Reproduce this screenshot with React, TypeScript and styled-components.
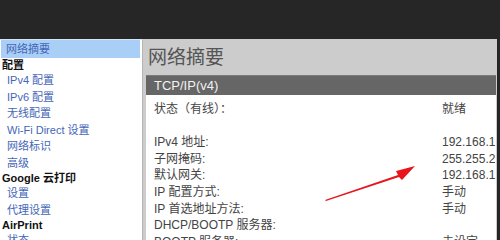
import React from "react";
import styled, { createGlobalStyle } from "styled-components";

const Global = createGlobalStyle`
  html, body { margin: 0; padding: 0; background: #262626; }
  body { font-family: "Liberation Sans", "Noto Sans CJK SC", sans-serif; }
`;

const Page = styled.div`
  width: 500px;
  height: 240px;
  overflow: hidden;
  background: #262626;
  display: flex;
  flex-direction: column;
  position: relative;
`;

const TopBar = styled.div`
  height: 39px;
  flex: none;
  background: #262626;
`;

const Main = styled.div`
  flex: 1;
  display: flex;
  padding-right: 3px;
  min-height: 0;
`;

const Sidebar = styled.nav`
  width: 139px;
  flex: none;
  background: #fff;
  border-top: 1px solid #d6e4f3;
  border-right: 1px solid #b5b5b5;
  padding: 0 2px 0 1px;
  display: flex;
  flex-direction: column;
`;

const NavLink = styled.div<{ $active?: boolean }>`
  height: 16.5px;
  line-height: 16.5px;
  flex: none;
  padding-left: ${(p) => (p.$active ? 5 : 6)}px;
  font-size: 11px;
  color: #4466b8;
  background: ${(p) => (p.$active ? "#a9cff6" : "transparent")};
  ${(p) => (p.$active ? "height: 18px; line-height: 18px;" : "")}
  white-space: nowrap;
`;

const NavHeader = styled.div`
  height: 14px;
  line-height: 14px;
  flex: none;
  padding-left: 1px;
  font-size: 11px;
  font-weight: bold;
  color: #111;
  white-space: nowrap;
`;

const Content = styled.section`
  flex: 1;
  background: #cccccc;
  padding: 0 1px 0 3px;
  display: flex;
  flex-direction: column;
  min-width: 0;
`;

const Title = styled.h1`
  margin: 0;
  height: 36px;
  line-height: 38px;
  padding-left: 2px;
  font-size: 19px;
  font-weight: normal;
  color: #555;
  flex: none;
`;

const SectionBar = styled.div`
  height: 19px;
  line-height: 19px;
  background: #666666;
  border-top: 1px solid #7a7a7a;
  color: #f2f2f2;
  font-size: 13px;
  padding-left: 8px;
  flex: none;
`;

const Panel = styled.div`
  flex: 1;
  background: #fff;
  padding: 6px 0 0 8px;
  overflow: hidden;
`;

const Row = styled.div`
  height: 16.6px;
  line-height: 16.6px;
  display: flex;
  font-size: 12px;
  color: #444;
  white-space: nowrap;
`;

const Label = styled.span`
  width: 288px;
  flex: none;
`;

const Value = styled.span`
  color: #444;
`;

const Arrow = styled.svg`
  position: absolute;
  left: 320px;
  top: 160px;
  width: 100px;
  height: 45px;
  pointer-events: none;
`;

const navItems: Array<{ t: string; h?: boolean; a?: boolean }> = [
  { t: "网络摘要", a: true },
  { t: "配置", h: true },
  { t: "IPv4 配置" },
  { t: "IPv6 配置" },
  { t: "无线配置" },
  { t: "Wi-Fi Direct 设置" },
  { t: "网络标识" },
  { t: "高级" },
  { t: "Google 云打印", h: true },
  { t: "设置" },
  { t: "代理设置" },
  { t: "AirPrint", h: true },
  { t: "状态" },
];

const rows: Array<[string, string]> = [
  ["状态（有线）：", "就绪"],
  ["", ""],
  ["IPv4 地址:", "192.168.1.100"],
  ["子网掩码:", "255.255.255.0"],
  ["默认网关:", "192.168.1.1"],
  ["IP 配置方式:", "手动"],
  ["IP 首选地址方法:", "手动"],
  ["DHCP/BOOTP 服务器:", ""],
  ["BOOTP 服务器:", "未设定"],
];

export default function App() {
  return (
    <>
      <Global />
      <Page>
        <TopBar />
        <Main>
          <Sidebar>
            {navItems.map((n, i) =>
              n.h ? (
                <NavHeader key={i}>{n.t}</NavHeader>
              ) : (
                <NavLink key={i} $active={n.a}>
                  {n.t}
                </NavLink>
              )
            )}
          </Sidebar>
          <Content>
            <Title>网络摘要</Title>
            <SectionBar>TCP/IP(v4)</SectionBar>
            <Panel>
              {rows.map(([l, v], i) => (
                <Row key={i}>
                  <Label>{l}</Label>
                  <Value>{v}</Value>
                </Row>
              ))}
            </Panel>
          </Content>
        </Main>
        <Arrow viewBox="0 0 100 45">
          <polygon points="5,40 78,15 76,11 95,6 82,20 79,17 6,41" fill="#e8161c" />
        </Arrow>
      </Page>
    </>
  );
}
